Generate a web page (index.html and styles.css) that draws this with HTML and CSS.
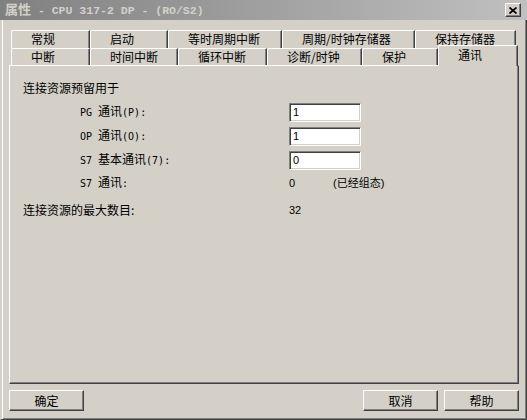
FILE: index.html
```html
<!DOCTYPE html>
<html lang="zh-CN">
<head>
<meta charset="utf-8">
<title>属性</title>
<link rel="stylesheet" href="styles.css">
</head>
<body>
<div class="window">
  <div class="titlebar">
    <span class="title"><span class="t-cjk">属性</span> - CPU 317-2 DP - (RO/S2)</span>
    <span class="close"><svg width="8" height="7" viewBox="0 0 8 7"><path d="M0.5 0.5 L7.5 6.5 M7.5 0.5 L0.5 6.5" stroke="#000" stroke-width="1.7" fill="none"/></svg></span>
  </div>
  <div class="frame">
    <div class="tabs">
      <div class="row r1">
        <div class="tab w79">常规</div>
        <div class="tab w78">启动</div>
        <div class="tab w114">等时周期中断</div>
        <div class="tab w133">周期/时钟存储器</div>
        <div class="tab w101">保持存储器</div>
      </div>
      <div class="row r2">
        <div class="tab w79">中断</div>
        <div class="tab w88">时间中断</div>
        <div class="tab w89">循环中断</div>
        <div class="tab w95">诊断/时钟</div>
        <div class="tab w76">保护</div>
        <div class="tab sel w80">通讯</div>
      </div>
    </div>
    <div class="panel">
      <div class="line heading">连接资源预留用于</div>
      <div class="line item">
        <span class="label"><span class="m">PG </span>通讯<span class="m">(P):</span></span>
        <span class="field">1</span>
      </div>
      <div class="line item">
        <span class="label"><span class="m">OP </span>通讯<span class="m">(O):</span></span>
        <span class="field">1</span>
      </div>
      <div class="line item">
        <span class="label"><span class="m">S7 </span>基本通讯<span class="m">(7):</span></span>
        <span class="field">0</span>
      </div>
      <div class="line item short">
        <span class="label"><span class="m">S7 </span>通讯<span class="m">:</span></span>
        <span class="value num">0</span>
        <span class="value">(已经组态)</span>
      </div>
      <div class="line total">
        <span class="label wide">连接资源的最大数目:</span>
        <span class="value">32</span>
      </div>
    </div>
    <div class="buttons">
      <div class="btn">确定</div>
      <div class="right">
        <div class="btn">取消</div>
        <div class="btn">帮助</div>
      </div>
    </div>
  </div>
</div>
</body>
</html>
```

FILE: styles.css
```css
* { box-sizing: border-box; }
html, body { margin: 0; padding: 0; }
body {
  width: 527px;
  height: 420px;
  background: #d4d0c8;
  font-family: "Noto Sans CJK SC", "Liberation Sans", sans-serif;
  font-size: 12px;
  color: #000;
  overflow: hidden;
}
.window {
  width: 527px;
  height: 420px;
  display: flex;
  flex-direction: column;
}
.titlebar {
  height: 20px;
  flex: none;
  display: flex;
  align-items: center;
  justify-content: space-between;
  padding-left: 5px;
  padding-right: 6px;
  background: linear-gradient(to right, #808080, #c0c0c0);
}
.title {
  font-family: "Liberation Mono", "Noto Sans CJK SC", monospace;
  font-weight: bold;
  font-size: 11.5px;
  color: #d4d0c8;
  line-height: 14px;
  white-space: pre;
}
.t-cjk {
  font-family: "Noto Sans CJK SC", sans-serif;
  font-size: 13px;
}
.close {
  width: 16px;
  height: 14px;
  display: flex;
  align-items: center;
  justify-content: center;
  background: #d4d0c8;
  border-top: 1px solid #fff;
  border-left: 1px solid #fff;
  border-right: 1px solid #404040;
  border-bottom: 1px solid #404040;
  box-shadow: inset -1px -1px 0 #808080;
}
.frame {
  flex: 1;
  display: flex;
  flex-direction: column;
  border-left: 2px solid #d4d0c8;
  border-right: 1px solid #404040;
  border-bottom: 1px solid #404040;
  box-shadow: inset 1px 0 0 #fff, inset -1px -1px 0 #808080;
  padding: 10px 7px 0 7px;
}
.tabs {
  margin-left: 2px;
  height: 35px;
  flex: none;
}
.row {
  display: flex;
  align-items: flex-start;
}
.r1 { height: 18px; }
.r2 { height: 17px; }
.tab {
  flex: none;
  height: 100%;
  padding-left: 19px;
  background: #d4d0c8;
  border-top: 1px solid #fff;
  border-left: 1px solid #fff;
  border-right: 1px solid #404040;
  border-top-left-radius: 2px;
  box-shadow: inset -1px 0 0 #808080;
  white-space: nowrap;
  font-size: 12px;
  line-height: 16px;
}
.tab.sel {
  height: 21px;
  margin-top: -3px;
  line-height: 17px;
  position: relative;
  z-index: 2;
}
.w76 { width: 76px; }
.w78 { width: 78px; }
.w79 { width: 79px; }
.w80 { width: 80px; }
.w88 { width: 88px; }
.w89 { width: 89px; }
.w95 { width: 95px; }
.w101 { width: 101px; }
.w114 { width: 114px; }
.w133 { width: 133px; }
.panel {
  height: 319px;
  flex: none;
  border-top: 1px solid #fff;
  border-left: 1px solid #fff;
  border-right: 1px solid #404040;
  border-bottom: 1px solid #404040;
  box-shadow: inset -1px -1px 0 #808080;
  padding: 10px 0 0 13px;
}
.line {
  display: flex;
  align-items: center;
  height: 24px;
  line-height: 14px;
  white-space: nowrap;
}
.item { padding-left: 57px; }
.item.short { height: 22px; }
.total { margin-top: 4px; }
.label { width: 209px; flex: none; white-space: pre; }
.label.wide { width: 266px; }
.m {
  font-family: "DejaVu Sans Mono", monospace;
  font-size: 10px;
}
.field {
  width: 72px;
  height: 19px;
  background: #fff;
  border-top: 1px solid #808080;
  border-left: 1px solid #808080;
  border-right: 1px solid #fff;
  border-bottom: 1px solid #fff;
  box-shadow: inset 1px 1px 0 #404040, inset -1px -1px 0 #d4d0c8;
  padding-left: 3px;
  font-family: "Liberation Sans", sans-serif;
  font-size: 11px;
  line-height: 17px;
}
.value {
  font-family: "Liberation Sans", "Noto Sans CJK SC", sans-serif;
  font-size: 11px;
}
.value.num { width: 44px; flex: none; }
.buttons {
  display: flex;
  justify-content: space-between;
  margin-top: 6px;
}
.right { display: flex; gap: 6px; }
.btn {
  width: 75px;
  height: 21px;
  display: flex;
  align-items: center;
  justify-content: center;
  border-top: 1px solid #fff;
  border-left: 1px solid #fff;
  border-right: 1px solid #404040;
  border-bottom: 1px solid #404040;
  box-shadow: inset -1px -1px 0 #808080;
  font-size: 12px;
  line-height: 14px;
}
```
